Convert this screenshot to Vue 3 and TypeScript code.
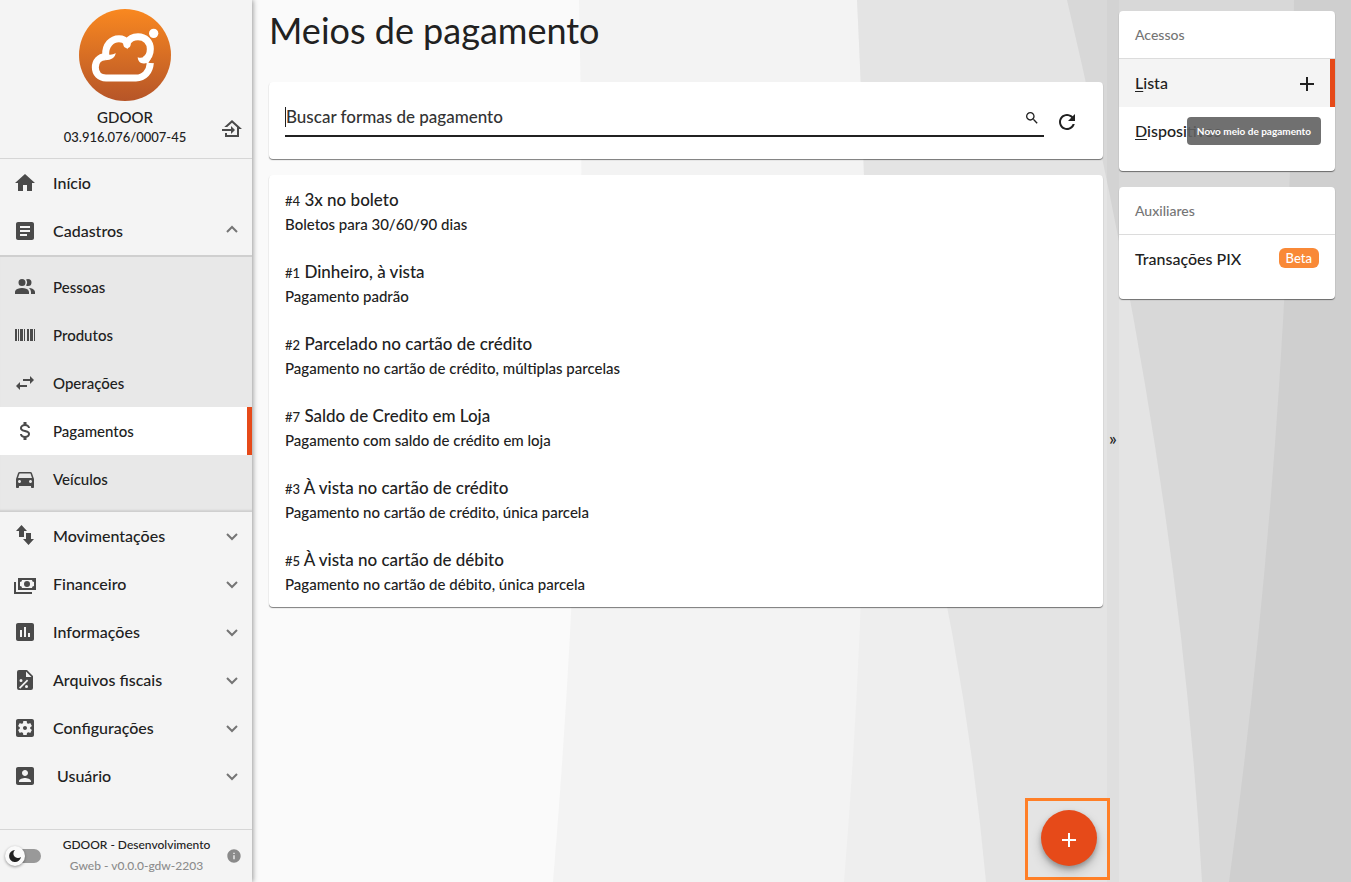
<script setup lang="ts">
import { ref } from 'vue'

interface MenuItem {
  label: string
  icon: string
  inset?: boolean
}

interface PaymentMethod {
  id: number
  name: string
  description: string
}

const icons: Record<string, string> = {
  home: 'M10 20v-6h4v6h5v-8h3L12 3 2 12h3v8z',
  article:
    'M19 3H5c-1.1 0-2 .9-2 2v14c0 1.1.9 2 2 2h14c1.1 0 2-.9 2-2V5c0-1.1-.9-2-2-2zm-5 14H7v-2h7v2zm3-4H7v-2h10v2zm0-4H7V7h10v2z',
  people:
    'M16 17V19H2V17S2 13 9 13 16 17 16 17M12.5 7.5A3.5 3.5 0 1 0 9 11A3.5 3.5 0 0 0 12.5 7.5M15.94 13A5.32 5.32 0 0 1 18 17V19H22V17S22 13.37 15.94 13M15 4A3.39 3.39 0 0 0 13.07 4.59A5 5 0 0 1 13.07 10.41A3.39 3.39 0 0 0 15 11A3.5 3.5 0 0 0 15 4Z',
  barcode:
    'M2 6H4V18H2V6M5 6H6V18H5V6M7 6H10V18H7V6M11 6H12V18H11V6M14 6H16V18H14V6M17 6H20V18H17V6M21 6H22V18H21V6Z',
  swap: 'M21 9L17 5V8H10V10H17V13M7 11L3 15L7 19V16H14V14H7V11Z',
  money:
    'M7 15H9C9 16.08 10.37 17 12 17C13.63 17 15 16.08 15 15C15 13.9 13.96 13.5 11.76 12.97C9.64 12.44 7 11.78 7 9C7 7.21 8.47 5.69 10.5 5.18V3H13.5V5.18C15.53 5.69 17 7.21 17 9H15C15 7.92 13.63 7 12 7C10.37 7 9 7.92 9 9C9 10.1 10.04 10.5 12.24 11.03C14.36 11.56 17 12.22 17 15C17 16.79 15.53 18.31 13.5 18.82V21H10.5V18.82C8.47 18.31 7 16.79 7 15Z',
  car: 'M18.92 6.01C18.72 5.42 18.16 5 17.5 5h-11c-.66 0-1.21.42-1.42 1.01L3 12v8c0 .55.45 1 1 1h1c.55 0 1-.45 1-1v-1h12v1c0 .55.45 1 1 1h1c.55 0 1-.45 1-1v-8l-2.08-5.99zM6.5 16c-.83 0-1.5-.67-1.5-1.5S5.67 13 6.5 13s1.5.67 1.5 1.5S7.33 16 6.5 16zm11 0c-.83 0-1.5-.67-1.5-1.5s.67-1.5 1.5-1.5 1.5.67 1.5 1.5-.67 1.5-1.5 1.5zM5 11l1.5-4.5h11L19 11H5z',
  movement: 'M8.5 1L14 7H11V13H6V7H3zM13 9H18V15H21L15.5 21L10 15H13z',
  cash: 'M5 6H23V18H5V6M14 9A3 3 0 0 1 17 12A3 3 0 0 1 14 15A3 3 0 0 1 11 12A3 3 0 0 1 14 9M9 8A2 2 0 0 1 7 10V14A2 2 0 0 1 9 16H19A2 2 0 0 1 21 14V10A2 2 0 0 1 19 8H9M1 10H3V20H19V22H1V10Z',
  chart:
    'M19 3H5c-1.1 0-2 .9-2 2v14c0 1.1.9 2 2 2h14c1.1 0 2-.9 2-2V5c0-1.1-.9-2-2-2zM9 17H7v-7h2v7zm4 0h-2V7h2v10zm4 0h-2v-4h2v4z',
  percent:
    'M6 2A2 2 0 0 0 4 4V20A2 2 0 0 0 6 22H18A2 2 0 0 0 20 20V8L14 2H6M13 3.5V9H18.5L13 3.5M8 11A1.5 1.5 0 0 0 8 14A1.5 1.5 0 0 0 8 11M14 11.5L6 19.5L7.2 20.7L15.2 12.7L14 11.5M13.5 17A1.5 1.5 0 0 0 13.5 20A1.5 1.5 0 0 0 13.5 17Z',
  settings:
    'M12 10c-1.1 0-2 .9-2 2s.9 2 2 2 2-.9 2-2-.9-2-2-2zm7-7H5c-1.11 0-2 .9-2 2v14c0 1.1.89 2 2 2h14c1.11 0 2-.9 2-2V5c0-1.1-.89-2-2-2zm-1.75 9c0 .23-.02.46-.05.68l1.48 1.16c.13.11.17.3.08.45l-1.4 2.42c-.09.15-.27.21-.43.15l-1.74-.7c-.36.28-.76.51-1.18.69l-.26 1.85c-.03.17-.18.3-.35.3h-2.8c-.17 0-.32-.13-.35-.29l-.26-1.85c-.43-.18-.82-.41-1.18-.69l-1.74.7c-.16.06-.34 0-.43-.15l-1.4-2.42c-.09-.15-.05-.34.08-.45l1.48-1.16c-.03-.23-.05-.46-.05-.69 0-.23.02-.46.05-.68l-1.48-1.16c-.13-.11-.17-.3-.08-.45l1.4-2.42c.09-.15.27-.21.43-.15l1.74.7c.36-.28.76-.51 1.18-.69l.26-1.85c.03-.17.18-.3.35-.3h2.8c.17 0 .32.13.35.29l.26 1.85c.43.18.82.41 1.18.69l1.74-.7c.16-.06.34 0 .43.15l1.4 2.42c.09.15.05.34-.08.45l-1.48 1.16c.03.23.05.46.05.69z',
  user: 'M3 5v14c0 1.1.89 2 2 2h14c1.1 0 2-.9 2-2V5c0-1.1-.9-2-2-2H5c-1.11 0-2 .9-2 2zm12 4c0 1.66-1.34 3-3 3s-3-1.34-3-3 1.34-3 3-3 3 1.34 3 3zm-9 8c0-2 4-3.1 6-3.1s6 1.1 6 3.1v1H6v-1z',
}

const registers: MenuItem[] = [
  { label: 'Pessoas', icon: 'people' },
  { label: 'Produtos', icon: 'barcode' },
  { label: 'Operações', icon: 'swap' },
  { label: 'Pagamentos', icon: 'money' },
  { label: 'Veículos', icon: 'car' },
]

const groups: MenuItem[] = [
  { label: 'Movimentações', icon: 'movement' },
  { label: 'Financeiro', icon: 'cash' },
  { label: 'Informações', icon: 'chart' },
  { label: 'Arquivos fiscais', icon: 'percent' },
  { label: 'Configurações', icon: 'settings' },
  { label: 'Usuário', icon: 'user', inset: true },
]

const methods: PaymentMethod[] = [
  { id: 4, name: '3x no boleto', description: 'Boletos para 30/60/90 dias' },
  { id: 1, name: 'Dinheiro, à vista', description: 'Pagamento padrão' },
  { id: 2, name: 'Parcelado no cartão de crédito', description: 'Pagamento no cartão de crédito, múltiplas parcelas' },
  { id: 7, name: 'Saldo de Credito em Loja', description: 'Pagamento com saldo de crédito em loja' },
  { id: 3, name: 'À vista no cartão de crédito', description: 'Pagamento no cartão de crédito, única parcela' },
  { id: 5, name: 'À vista no cartão de débito', description: 'Pagamento no cartão de débito, única parcela' },
]

const active = ref('Pagamentos')
const registersOpen = ref(true)
const search = ref('')
const dark = ref(false)
</script>

<template>
  <div class="app">
    <svg class="backdrop" viewBox="0 0 1351 882" preserveAspectRatio="none" aria-hidden="true">
      <rect width="1351" height="882" fill="#fafafa" />
      <path d="M579 0Q590 440 553 882H1351V0z" fill="#f3f3f3" />
      <path d="M857 0Q880 440 844 882H1351V0z" fill="#eeeeee" />
      <path d="M857 0Q861 82 864 175L880 330Q960 600 986 882H1351V0z" fill="#e4e4e4" />
      <path d="M1067 0Q1180 480 1202 882H1351V0z" fill="#d8d8d8" />
      <path d="M1294 0Q1289 440 1229 882H1351V0z" fill="#cfcfcf" />
    </svg>

    <aside class="sidebar">
      <header class="company">
        <svg class="logo" viewBox="237 27 276 276" role="img" aria-label="GDOOR">
          <defs>
            <linearGradient id="logo-fill" x1="0" y1="0" x2="0" y2="1">
              <stop offset="0" stop-color="#f98820" />
              <stop offset="1" stop-color="#b65528" />
            </linearGradient>
          </defs>
          <circle cx="375" cy="165" r="138" fill="url(#logo-fill)" />
          <g fill="none" stroke="#fff" stroke-width="21">
            <path d="M451 189C449 215 433 234 408 234H318C298 234 286 220 286 202C286 184 298 170 316 170" />
            <path d="M317 166C315 135 335 116 357 116C368 116 375 119 381 128C388 116 399 110 414 110C436 110 451 126 451 147C451 162 444 174 434 180" />
          </g>
          <g fill="#fff">
            <path d="M310 160C325 165 337 166 347 159C346 172 334 180 316 181z" />
            <circle cx="381" cy="133" r="11" />
            <path d="M413 172C424 176 432 172 438 166L452 177L445 189H462V190H436C422 193 414 184 413 172z" />
            <circle cx="461" cy="100" r="14" />
          </g>
        </svg>
        <div class="company-name">GDOOR</div>
        <div class="company-id">03.916.076/0007-45</div>
        <button class="icon-button switch-company" type="button" aria-label="Trocar empresa">
          <svg class="icon" viewBox="0 0 24 24">
            <path d="M15 13L11 9V12H2V14H11V17M5 20V16H7V18H17V10.19L12 5.69L7.21 10H4.22L12 3L22 12H19V20H5Z" />
          </svg>
        </button>
      </header>

      <nav class="menu">
        <a class="row" href="#inicio">
          <svg class="icon" viewBox="0 0 24 24"><path :d="icons.home" /></svg>
          <span class="row-label">Início</span>
        </a>
        <button class="row" type="button" :aria-expanded="registersOpen" @click="registersOpen = !registersOpen">
          <svg class="icon" viewBox="0 0 24 24"><path :d="icons.article" /></svg>
          <span class="row-label">Cadastros</span>
          <svg class="chevron" viewBox="0 0 12 12"><path d="M1 7L6 2L11 7" /></svg>
        </button>
        <div v-if="registersOpen" class="submenu">
          <a
            v-for="item in registers"
            :key="item.label"
            class="row"
            :class="{ active: item.label === active }"
            href="#cadastros"
            @click.prevent="active = item.label"
          >
            <svg class="icon" viewBox="0 0 24 24"><path :d="icons[item.icon]" /></svg>
            <span class="row-label">{{ item.label }}</span>
          </a>
        </div>
        <button v-for="item in groups" :key="item.label" class="row" type="button">
          <svg class="icon" viewBox="0 0 24 24">
            <path :d="icons[item.icon]" :fill-rule="item.icon === 'percent' ? 'evenodd' : 'nonzero'" />
          </svg>
          <span class="row-label" :class="{ inset: item.inset }">{{ item.label }}</span>
          <svg class="chevron" viewBox="0 0 12 12"><path d="M1 4L6 9L11 4" /></svg>
        </button>
      </nav>

      <footer class="status">
        <label class="theme">
          <input v-model="dark" type="checkbox" aria-label="Tema escuro" />
          <span class="thumb">
            <svg viewBox="0 0 14 14"><path d="M7 1A6 6 0 1 0 13 8A4 4 0 1 1 7 1Z" /></svg>
          </span>
        </label>
        <div class="build">
          <div class="build-name">GDOOR - Desenvolvimento</div>
          <div class="build-version">Gweb - v0.0.0-gdw-2203</div>
        </div>
        <button class="icon-button info" type="button" aria-label="Informações da versão">
          <svg viewBox="0 0 24 24"><path d="M12 2C6.48 2 2 6.48 2 12s4.48 10 10 10 10-4.48 10-10S17.52 2 12 2zm1 15h-2v-6h2v6zm0-8h-2V7h2v2z" /></svg>
        </button>
      </footer>
    </aside>

    <main class="content">
      <h1>Meios de pagamento</h1>

      <form class="card search" @submit.prevent>
        <div class="field">
          <input v-model="search" type="text" aria-label="Buscar formas de pagamento" placeholder="Buscar formas de pagamento" />
          <button class="icon-button find" type="submit" aria-label="Buscar">
            <svg viewBox="0 0 24 24"><path d="M15.5 14h-.79l-.28-.27C15.41 12.59 16 11.11 16 9.5 16 5.91 13.09 3 9.5 3S3 5.91 3 9.5 5.91 16 9.5 16c1.61 0 3.09-.59 4.23-1.57l.27.28v.79l5 4.99L20.49 19l-4.99-5zm-6 0C7.01 14 5 11.99 5 9.5S7.01 5 9.5 5 14 7.01 14 9.5 11.99 14 9.5 14z" /></svg>
          </button>
        </div>
        <button class="icon-button reload" type="button" aria-label="Atualizar">
          <svg class="icon" viewBox="0 0 24 24"><path d="M17.65 6.35C16.2 4.9 14.21 4 12 4c-4.42 0-7.99 3.58-7.99 8s3.57 8 7.99 8c3.73 0 6.84-2.55 7.73-6h-2.08c-.82 2.33-3.04 4-5.65 4-3.31 0-6-2.69-6-6s2.69-6 6-6c1.66 0 3.14.69 4.22 1.78L13 11h7V4l-2.35 2.35z" /></svg>
        </button>
      </form>

      <ul class="card methods">
        <li v-for="method in methods" :key="method.id">
          <div class="method-name"><small>#{{ method.id }}</small> {{ method.name }}</div>
          <div class="method-description">{{ method.description }}</div>
        </li>
      </ul>

      <div class="fab-frame">
        <button class="fab" type="button" aria-label="Novo meio de pagamento">
          <svg viewBox="0 0 24 24"><path d="M19 13h-6v6h-2v-6H5v-2h6V5h2v6h6v2z" /></svg>
        </button>
      </div>
    </main>

    <button class="collapse" type="button" aria-label="Recolher painel">»</button>

    <aside class="side">
      <section class="card panel">
        <h2>Acessos</h2>
        <div class="link-row selected">
          <a href="#lista"><u>L</u>ista</a>
          <button class="icon-button add" type="button" aria-describedby="add-tip" aria-label="Adicionar">
            <svg class="icon" viewBox="0 0 24 24"><path d="M19 13h-6v6h-2v-6H5v-2h6V5h2v6h6v2z" /></svg>
          </button>
        </div>
        <div class="link-row">
          <a href="#dispositivos"><u>D</u>ispositivos</a>
        </div>
        <div id="add-tip" class="tooltip" role="tooltip">Novo meio de pagamento</div>
      </section>
      <section class="card panel">
        <h2>Auxiliares</h2>
        <div class="link-row">
          <a href="#pix">Transações PIX</a>
          <span class="badge">Beta</span>
        </div>
      </section>
    </aside>
  </div>
</template>

<style>
body {
  margin: 0;
}
</style>

<style scoped>
.app {
  position: relative;
  display: grid;
  grid-template-columns: 252px minmax(0, 1fr) 12px 232px;
  min-height: 100vh;
  overflow: hidden;
  color: #212121;
  font-family: Lato, 'Open Sans', sans-serif;
  font-weight: 500;
}

.app *,
.app *::before {
  box-sizing: border-box;
}

.backdrop {
  position: absolute;
  inset: 0;
  width: 100%;
  height: 100%;
}

button {
  padding: 0;
  border: 0;
  background: none;
  color: inherit;
  font: inherit;
  cursor: pointer;
}

a {
  color: inherit;
  text-decoration: none;
}

svg {
  display: block;
  fill: currentColor;
}

.icon {
  width: 24px;
  height: 24px;
  flex: none;
}

.icon-button {
  display: flex;
  align-items: center;
  justify-content: center;
  flex: none;
}

.sidebar {
  position: relative;
  display: flex;
  flex-direction: column;
  background: #f4f4f4;
  box-shadow: 1px 0 5px rgba(0, 0, 0, 0.4);
}

.company {
  position: relative;
  height: 159px;
  padding: 9px 2px 0 0;
  border-bottom: 1px solid #d6d6d6;
  text-align: center;
}

.logo {
  width: 92px;
  height: 92px;
  margin: 0 auto 6px;
}

.company-name {
  font-size: 15px;
  line-height: 20px;
}

.company-id {
  font-size: 13px;
  line-height: 20px;
}

.switch-company {
  position: absolute;
  right: 8px;
  bottom: 17px;
  color: #4a4a4a;
}

.menu {
  flex: 1;
}

.row {
  display: flex;
  align-items: center;
  width: 100%;
  height: 48px;
  padding: 0 14px 0 13px;
  text-align: left;
}

.row .icon {
  color: #4a4a4a;
}

.row-label {
  flex: 1;
  margin-left: 16px;
  font-size: 16px;
  line-height: 20px;
}

.row-label.inset {
  margin-left: 20px;
}

.chevron {
  width: 12px;
  height: 12px;
  fill: none;
  stroke: #757575;
  stroke-width: 2;
}

.submenu {
  padding: 6px 0 8px;
  border-top: 2px solid #cfcfcf;
  border-bottom: 1px solid #cfcfcf;
  background: #e8e8e8;
  box-shadow: inset 0 -2px 2px -1px rgba(0, 0, 0, 0.1);
}

.submenu .row-label {
  font-size: 15px;
}

.submenu .active {
  border-right: 5px solid #e64a19;
  background: #fff;
}

.status {
  display: flex;
  align-items: center;
  height: 53px;
  padding: 0 10px 0 5px;
  border-top: 1px solid #d6d6d6;
}

.theme {
  position: relative;
  display: block;
  width: 36px;
  height: 20px;
}

.theme input {
  appearance: none;
  display: block;
  width: 33px;
  height: 14px;
  margin: 3px 0 3px 3px;
  border-radius: 7px;
  background: #999;
}

.thumb {
  position: absolute;
  top: 0;
  left: 0;
  display: flex;
  align-items: center;
  justify-content: center;
  width: 20px;
  height: 20px;
  border-radius: 50%;
  background: #fafafa;
  box-shadow: 0 1px 3px rgba(0, 0, 0, 0.4);
}

.thumb svg {
  width: 14px;
  height: 14px;
}

.build {
  flex: 1;
  padding: 0 0 2px 6px;
  text-align: center;
  font-size: 12px;
  line-height: 21px;
}

.build-version {
  color: #8c8c8c;
}

.info {
  color: #8a8a8a;
}

.info svg {
  width: 16px;
  height: 16px;
}

.content {
  position: relative;
  z-index: 1;
  padding: 0 4px 16px 17px;
}

h1 {
  margin: 0;
  padding: 6px 0 28px;
  font-size: 36px;
  font-weight: 400;
  line-height: 48px;
}

.card {
  position: relative;
  margin: 0 0 16px;
  border-radius: 4px;
  background: #fff;
  box-shadow: 0 1px 1px rgba(0, 0, 0, 0.5);
}

.search {
  display: flex;
  height: 77px;
  padding: 22px 24px 22px 16px;
}

.field {
  display: flex;
  align-items: center;
  flex: 1;
  height: 33px;
  padding: 0 4px 6px 0;
  border-bottom: 2px solid #212121;
}

.field input {
  flex: 1;
  min-width: 0;
  height: 20px;
  padding: 0;
  border: 0;
  border-left: 1px solid #212121;
  outline: 0;
  background: none;
  color: #212121;
  font: inherit;
  font-size: 17px;
}

.field input::placeholder {
  color: #333;
  opacity: 1;
}

.find {
  padding-top: 3px;
}

.find svg {
  width: 16px;
  height: 16px;
}

.reload {
  height: 36px;
  margin-left: 11px;
}

.methods {
  padding: 0;
  list-style: none;
}

.methods li {
  height: 72px;
  padding: 13px 16px 0;
}

.method-name {
  font-size: 17px;
  line-height: 23px;
}

.method-name small {
  font-size: 13px;
}

.method-description {
  font-size: 15px;
  line-height: 22px;
}

.fab-frame {
  position: absolute;
  right: -3px;
  bottom: 2px;
  width: 85px;
  height: 82px;
  padding: 9px 0 0 13px;
  border: 3px solid #ff7f27;
}

.fab {
  display: flex;
  align-items: center;
  justify-content: center;
  width: 56px;
  height: 56px;
  padding-top: 4px;
  border-radius: 50%;
  background: #e64a19;
  box-shadow: 0 3px 5px rgba(0, 0, 0, 0.25), 0 6px 12px rgba(0, 0, 0, 0.18);
  color: #fff;
}

.fab svg {
  width: 24px;
  height: 24px;
}

.collapse {
  position: relative;
  padding-bottom: 6px;
  background: rgba(0, 0, 0, 0.02);
  font-size: 18px;
}

.side {
  position: relative;
  padding: 11px 16px 0 0;
}

.panel {
  padding-bottom: 16px;
}

h2 {
  height: 48px;
  margin: 0;
  padding: 0 16px;
  border-bottom: 1px solid #dcdcdc;
  color: #757575;
  font-size: 14px;
  font-weight: 500;
  line-height: 47px;
}

.link-row {
  display: flex;
  align-items: center;
  justify-content: space-between;
  height: 48px;
  padding: 0 16px 2px;
  font-size: 16px;
}

.link-row u {
  text-underline-offset: 2px;
}

.selected {
  padding-right: 11px;
  border-right: 5px solid #e64a19;
  background: #f4f4f4;
}

.selected .add {
  padding-top: 4px;
}

.badge {
  padding: 0 7px;
  border-radius: 6px;
  background: #f98937;
  color: #fff;
  font-size: 13px;
  line-height: 20px;
}

.tooltip {
  position: absolute;
  top: 106px;
  right: 14px;
  padding: 0 10px;
  border-radius: 4px;
  background: rgba(97, 97, 97, 0.9);
  color: #fff;
  font-size: 10px;
  font-weight: 700;
  line-height: 28px;
  white-space: nowrap;
}
</style>
